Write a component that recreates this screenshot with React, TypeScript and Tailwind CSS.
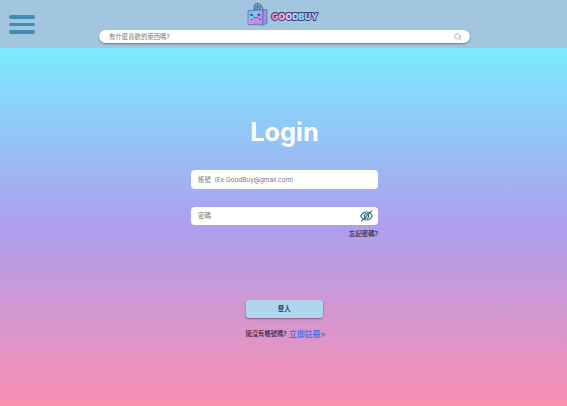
import React from "react";

function Logo() {
  return (
    <svg className="block overflow-visible" width="74" height="27" viewBox="0 0 74 27" role="img" aria-label="GoodBuy">
      <defs>
        <linearGradient id="bag" x1="0" y1="0" x2="1" y2="1">
          <stop offset="0" stopColor="#63b8f0" />
          <stop offset="0.4" stopColor="#83c6f5" />
          <stop offset="0.6" stopColor="#c88ae0" />
          <stop offset="1" stopColor="#60a8ef" />
        </linearGradient>
        <linearGradient id="word" x1="0" y1="0" x2="1" y2="0">
          <stop offset="0" stopColor="#ff86c4" />
          <stop offset="0.35" stopColor="#f8c4ee" />
          <stop offset="0.62" stopColor="#7ee0ff" />
          <stop offset="1" stopColor="#d4b4f6" />
        </linearGradient>
      </defs>
      <path d="M7 9C7 1 15 0 16 8" fill="none" stroke="#4a6390" strokeWidth="1.1" />
      <circle cx="10.5" cy="4.7" r="3.4" fill="#7fa8ce" stroke="#4d6891" strokeWidth="0.9" />
      <path d="M8 5h5M10.5 2.2v5M13 7l3 3" stroke="#405b88" strokeWidth="0.7" />
      <path d="M1 8.5 16 8v15L1 22.5Z" fill="url(#bag)" stroke="#5565ad" strokeWidth="0.7" />
      <path d="m16 8 4-.6v13.8L16 23Z" fill="#a58fe0" stroke="#5565ad" strokeWidth="0.7" />
      <path d="M1.5 17.5h4.5v4.6H1.5zM10 17.5h4v3.5h-4z" fill="#ed84d8" opacity="0.75" />
      <path d="M3.4 12.2h2.5v1.6H3.4zM10.6 12h2.5v1.6h-2.5zM4 17h1.3v1.3H4zM12 16.8h1.3v1.3H12z" fill="#253969" />
      <path d="M6 15.2q2.3 1.4 4.6 0" fill="none" stroke="#253969" strokeWidth="0.7" />
      <text
        x="24.5"
        y="17.9"
        textLength="46.5"
        lengthAdjust="spacingAndGlyphs"
        fontFamily="Inter, sans-serif"
        fontSize="9.6"
        fontWeight="900"
        fill="url(#word)"
        stroke="#2b3972"
        strokeWidth="1.8"
        strokeLinejoin="round"
        paintOrder="stroke"
      >
        GOODBUY
      </text>
    </svg>
  );
}

function SearchIcon() {
  return (
    <svg width="8" height="8" viewBox="0 0 8 8" fill="none" stroke="#9a9a9a" strokeWidth="0.7" strokeLinecap="round">
      <circle cx="3.4" cy="3.4" r="2.7" />
      <path d="m5.4 5.4 2 2" />
    </svg>
  );
}

function HiddenEyeIcon() {
  return (
    <svg width="13" height="12" viewBox="0 0 13 12" fill="none" stroke="#35677d" strokeWidth="1.1" strokeLinecap="round">
      <path d="M.7 6C3.4.7 9.6.7 12.3 6 9.6 11.3 3.4 11.3.7 6Z" />
      <circle cx="6.5" cy="6" r="2.2" />
      <path d="M1.5 11.1 11.7.9" />
    </svg>
  );
}

export default function App() {
  return (
    <div className="flex h-[406px] w-[567px] flex-col overflow-hidden bg-[#a3c6e0] font-['Inter','Noto_Sans_CJK_TC',sans-serif] text-[6.5px] leading-none">
      <header className="flex h-12 shrink-0">
        <button aria-label="Menu" className="mt-[15px] ml-[9px] flex h-[18.5px] w-[26px] flex-col justify-between">
          <span className="h-[3.5px] w-full rounded-full bg-[#3f8db5]" />
          <span className="h-[3.5px] w-full rounded-full bg-[#3f8db5]" />
          <span className="h-[3.5px] w-full rounded-full bg-[#3f8db5]" />
        </button>
        <div className="ml-16 flex w-[371px] flex-col">
          <div className="ml-[147.5px] h-[30px] pt-0.5">
            <Logo />
          </div>
          <div className="flex h-[13px] shrink-0 items-center justify-between rounded-full bg-white pr-2 pl-[10px] text-[#777] shadow-[0_1px_2px_rgba(0,0,0,0.4)]">
            <span className="pt-[2px] text-[6.4px]">有什麼喜歡的東西嗎?</span>
            <SearchIcon />
          </div>
        </div>
      </header>
      <main className="flex grow flex-col bg-linear-to-b/srgb from-[#7ceaff] via-[#ad9fee] to-[#fb8fb0] pl-[191px]">
        <h1 className="mt-[68px] w-[187px] text-center text-[25.3px] leading-[31px] font-bold text-white">Login</h1>
        <div className="mt-[23px] flex h-[18.5px] w-[187px] items-center rounded-[4px] bg-white pl-[7px] text-[#777]">
          <span className="pt-[2px] text-[6.4px] whitespace-pre">帳號  (Ex:GoodBuy@gmail.com)</span>
        </div>
        <div className="mt-[18.5px] flex h-[18px] w-[187px] items-center justify-between rounded-[4px] bg-white pr-[5px] pl-[7px] text-[#777]">
          <span className="pt-px">密碼</span>
          <HiddenEyeIcon />
        </div>
        <a className="mt-[5px] w-[187px] text-right text-[6.4px] leading-[8px] font-medium text-[#231b35]">忘記密碼?</a>
        <button className="mt-[62px] ml-[54.5px] h-[18px] w-[77.5px] rounded-[3px] bg-[#afd5ef] pt-px font-medium text-[#17202c] shadow-[0_1px_2px_rgba(0,0,0,0.4)]">
          登入
        </button>
        <div className="mt-[10px] ml-[54.5px] flex items-center gap-[2.5px] leading-[10px] font-medium whitespace-nowrap text-[#2b1b2e]">
          <span className="pt-px text-[6.3px]">還沒有帳號嗎?</span>
          <a className="text-[7.8px] font-bold text-[#4b74e8]">立即註冊&gt;</a>
        </div>
      </main>
    </div>
  );
}
